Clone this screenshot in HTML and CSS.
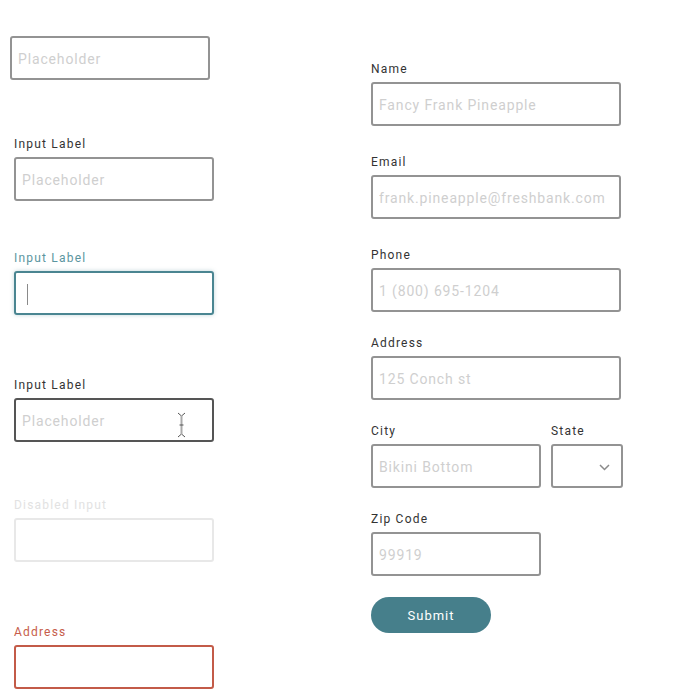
FILE: index.html
```html
<!DOCTYPE html>
<html>
<head>
<meta charset="utf-8">
<link rel="stylesheet" href="styles.css">
</head>
<body>
<div class="page">
  <div class="col col-left">
    <div class="field field-bare">
      <input class="input" type="text" placeholder="Placeholder">
    </div>
    <div class="field f2">
      <label class="label">Input Label</label>
      <input class="input" type="text" placeholder="Placeholder">
    </div>
    <div class="field f3">
      <label class="label label-focus">Input Label</label>
      <div class="input input-focus"><span class="caret"></span></div>
    </div>
    <div class="field f4">
      <label class="label">Input Label</label>
      <div class="input-wrap">
        <input class="input input-hover" type="text" placeholder="Placeholder">
        <svg class="ibeam" width="9" height="26" viewBox="0 0 9 26">
          <path d="M1 1 L4.5 4 L8 1" fill="none" stroke="#555" stroke-width="1"/>
          <path d="M1 25 L4.5 22 L8 25" fill="none" stroke="#555" stroke-width="1"/>
          <path d="M4.5 4 V22" stroke="#aaa" stroke-width="2"/>
          <path d="M2.5 13 H6.5" stroke="#555" stroke-width="1"/>
        </svg>
      </div>
    </div>
    <div class="field f5">
      <label class="label label-disabled">Disabled Input</label>
      <input class="input input-disabled" type="text" disabled>
    </div>
    <div class="field f6">
      <label class="label label-error">Address</label>
      <input class="input input-error" type="text">
    </div>
  </div>

  <form class="col col-right">
    <div class="field">
      <label class="label">Name</label>
      <input class="input" type="text" placeholder="Fancy Frank Pineapple">
    </div>
    <div class="field r-gap1">
      <label class="label">Email</label>
      <input class="input" type="text" placeholder="frank.pineapple@freshbank.com">
    </div>
    <div class="field r-gap1">
      <label class="label">Phone</label>
      <input class="input" type="text" placeholder="1 (800) 695-1204">
    </div>
    <div class="field r-gap2">
      <label class="label">Address</label>
      <input class="input" type="text" placeholder="125 Conch st">
    </div>
    <div class="row r-gap2">
      <div class="field city">
        <label class="label">City</label>
        <input class="input" type="text" placeholder="Bikini Bottom">
      </div>
      <div class="field state">
        <label class="label">State</label>
        <div class="input select">
          <svg class="chev" width="11" height="7" viewBox="0 0 11 7"><path d="M1 1 L5.5 5.5 L10 1" fill="none" stroke="#8a8a8a" stroke-width="1.5"/></svg>
        </div>
      </div>
    </div>
    <div class="field zip r-gap2">
      <label class="label">Zip Code</label>
      <input class="input" type="text" placeholder="99919">
    </div>
    <button class="btn" type="button">Submit</button>
  </form>
</div>
</body>
</html>
```

FILE: styles.css
```css
* { box-sizing: border-box; }
html, body { margin: 0; padding: 0; background: #fff; }
body { font-family: Roboto, "Liberation Sans", sans-serif; color: #333; }

.page {
  display: grid;
  grid-template-columns: 371px 252px;
  width: 700px;
}

.col { display: flex; flex-direction: column; }
.col-left { padding-left: 14px; padding-top: 36px; width: 214px; }
.col-right { padding-top: 60px; margin: 0; }

.field { display: flex; flex-direction: column; }
.field-bare { margin-left: -4px; }
.f2 { margin-top: 55px; }
.f3 { margin-top: 48px; }
.f4 { margin-top: 61px; }
.f5 { margin-top: 54px; }
.f6 { margin-top: 61px; }

.label {
  display: block;
  height: 17px;
  padding-top: 1px;
  line-height: 16px;
  font-size: 12px;
  letter-spacing: 1.2px;
  color: #333;
  margin-bottom: 5px;
}
.label-focus { color: #5b95a0; }
.label-disabled { color: #e2e2e2; }
.label-error { color: #c65d4a; }

.input {
  display: block;
  width: 200px;
  height: 44px;
  border: 2px solid #939393;
  border-radius: 3px;
  background: #fff;
  padding: 2px 6px 0;
  font-family: Roboto, "Liberation Sans", sans-serif;
  font-size: 14px;
  letter-spacing: 0.85px;
  color: #333;
  outline: none;
  margin: 0;
}
.input::placeholder { color: #cfcfcf; opacity: 1; }

.input-focus {
  border-color: #4a8591;
  box-shadow: 0 0 4px rgba(74, 133, 145, 0.35);
  display: flex;
  align-items: center;
  padding-left: 11px;
}
.caret { display: block; width: 1px; height: 21px; background: #8a8a8a; }

.input-wrap { position: relative; width: 200px; }
.input-hover { border-color: #555; }
.ibeam { position: absolute; left: 163px; top: 14px; }

.input-disabled { border-color: #e8e8e8; background: #fff; }
.input-error { border-color: #c35b48; }

.col-right .input { width: 250px; }
.r-gap1 { margin-top: 27px; }
.r-gap2 { margin-top: 22px; }

.row { display: flex; gap: 10px; }
.col-right .city .input { width: 170px; }
.col-right .state .input { width: 72px; }
.col-right .zip .input { width: 170px; }

.select { display: flex; align-items: center; justify-content: flex-end; padding-right: 11px; }

.btn {
  margin-top: 21px;
  width: 120px;
  height: 36px;
  border: none;
  border-radius: 18px;
  background: #467f8b;
  color: #fff;
  font-family: Roboto, "Liberation Sans", sans-serif;
  font-size: 13px;
  letter-spacing: 1px;
  padding: 0;
  cursor: pointer;
}
```
